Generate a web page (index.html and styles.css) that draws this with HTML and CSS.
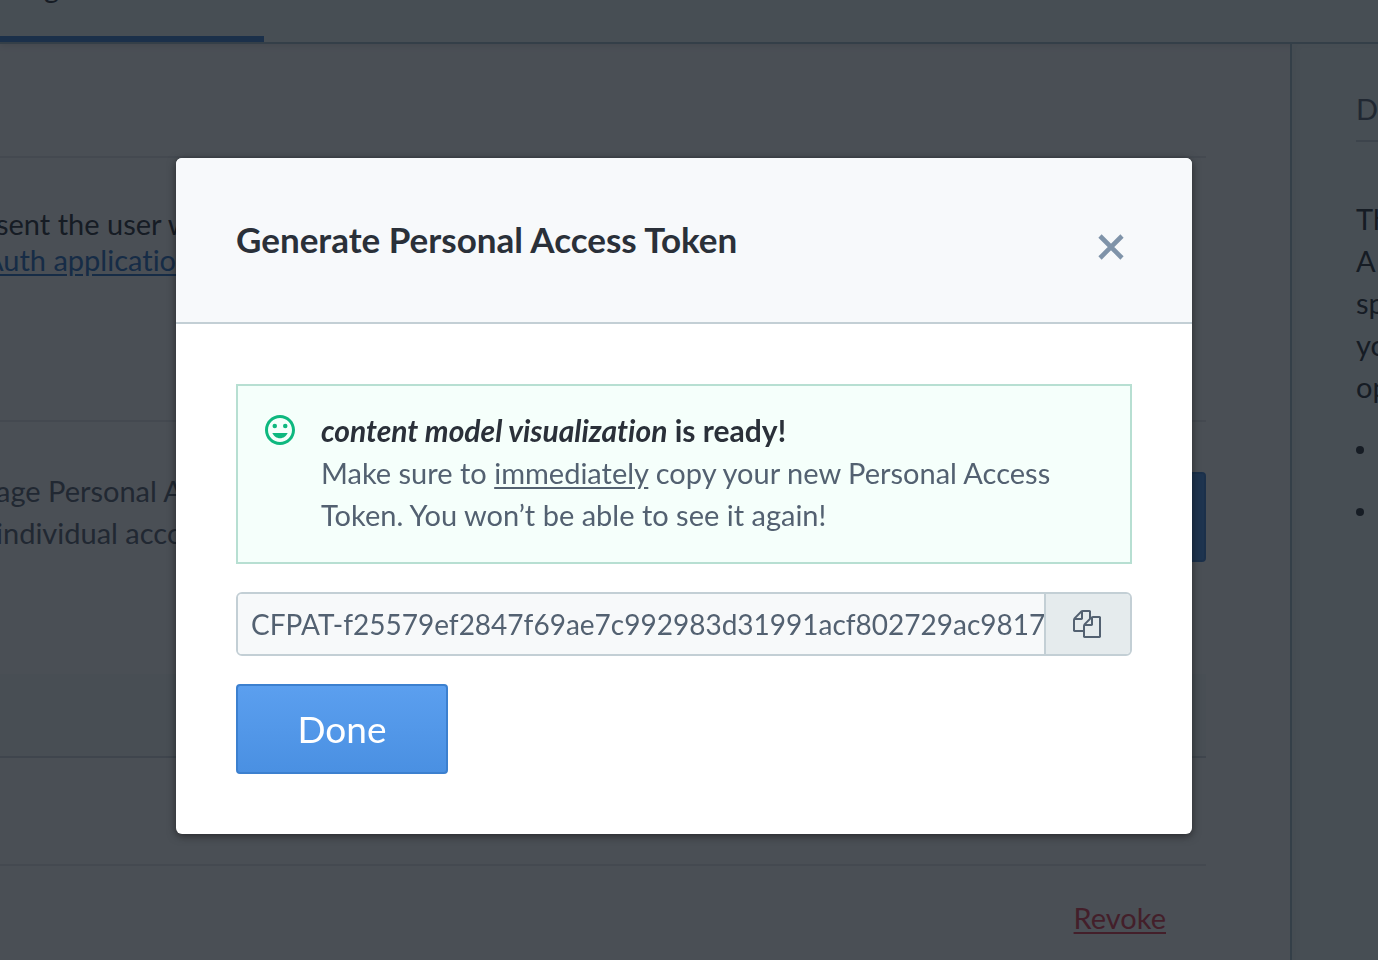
FILE: index.html
```html
<!DOCTYPE html>
<html lang="en">
<head>
    <meta charset="UTF-8">
    <meta name="viewport" content="width=device-width, initial-scale=1.0">
    <title>Personal Access Tokens</title>
    <link rel="stylesheet" href="styles.css">
</head>
<body>
    <div class="page">
        <nav class="tabs">
            <a href="#" class="tab">g</a>
        </nav>
        <div class="layout">
            <main class="content">
                <section class="section heading"></section>
                <section class="section oauth">
                    <p>sent the user w</p>
                    <a href="#">Auth application</a>
                </section>
                <section class="tokens">
                    <p>age Personal A<br>individual acco</p>
                    <button class="btn generate" aria-label="Generate personal token"></button>
                </section>
                <div class="list-head"></div>
                <div class="list-row"></div>
                <div class="list-row">
                    <a href="#" class="revoke">Revoke</a>
                </div>
            </main>
            <aside class="sidebar">
                <h2>D</h2>
                <p>Th<br>A<br>sp<br>yo<br>op</p>
                <ul>
                    <li></li>
                    <li></li>
                </ul>
            </aside>
        </div>
    </div>

    <div class="overlay">
        <div class="modal" role="dialog" aria-modal="true" aria-labelledby="modalTitle">
            <header class="modal-header">
                <h1 id="modalTitle">Generate Personal Access Token</h1>
                <button class="close" aria-label="Close">
                    <svg width="26" height="26" viewBox="0 0 26 26" fill="none" stroke="currentColor" stroke-width="4.6">
                        <path d="M2 2L24 24M24 2L2 24"/>
                    </svg>
                </button>
            </header>
            <div class="modal-body">
                <div class="note">
                    <svg class="note-icon" width="36" height="36" viewBox="0 0 24 24" fill="currentColor">
                        <path d="M11.99 2C6.47 2 2 6.48 2 12s4.47 10 9.99 10C17.52 22 22 17.52 22 12S17.52 2 11.99 2zM12 20c-4.42 0-8-3.58-8-8s3.58-8 8-8 8 3.58 8 8-3.58 8-8 8z"/>
                        <circle cx="8.5" cy="9.4" r="1.5"/>
                        <circle cx="15.5" cy="9.4" r="1.5"/>
                        <path d="M12 17.5c2.33 0 4.31-1.46 5.11-3.5H6.89c.8 2.04 2.78 3.5 5.11 3.5z"/>
                    </svg>
                    <div class="note-text">
                        <strong><em>content model visualization</em> is ready!</strong>
                        <p>Make sure to <u>immediately</u> copy your new Personal Access Token. You won’t be able to see it again!</p>
                    </div>
                </div>
                <div class="token-field">
                    <input type="text" aria-label="Personal access token" value="CFPAT-f25579ef2847f69ae7c992983d31991acf802729ac9817" readonly>
                    <button class="copy" aria-label="Copy token">
                        <svg width="28" height="28" viewBox="0 0 1792 1792" fill="currentColor">
                            <path d="M1696 384q40 0 68 28t28 68v1216q0 40-28 68t-68 28h-960q-40 0-68-28t-28-68v-288h-544q-40 0-68-28t-28-68v-672q0-40 20-88t48-76l408-408q28-28 76-48t88-20h416q40 0 68 28t28 68v328q68-40 128-40h416zm-544 213l-299 299h299v-299zm-640-384l-299 299h299v-299zm196 647l316-316v-416h-384v416q0 40-28 68t-68 28h-416v640h512v-256q0-40 20-88t48-76zm956 804v-1152h-384v416q0 40-28 68t-68 28h-416v640h896z"/>
                        </svg>
                    </button>
                </div>
                <button class="btn done">Done</button>
            </div>
        </div>
    </div>
</body>
</html>
```
FILE: styles.css
```css
* {
    box-sizing: border-box;
}

body {
    margin: 0;
    height: 100vh;
    overflow: hidden;
    font-family: 'Avenir Next', Lato, sans-serif;
    font-size: 29px;
    font-variant-ligatures: none;
    line-height: 42px;
    color: #536171;
    background-color: #f7f9fa;
}

h1, h2, p, ul {
    margin: 0;
    padding: 0;
}

button, input {
    font: inherit;
}

/* page behind the modal */
.page {
    height: 100vh;
    display: flex;
    flex-direction: column;
    overflow: hidden;
}

.tabs {
    display: flex;
    align-items: flex-end;
    height: 44px;
    flex-shrink: 0;
    background-color: #e9f5f5;
    border-bottom: 2px solid #a0bcc6;
    box-shadow: 0 2px 6px rgba(0, 0, 0, 0.1);
    overflow: hidden;
}

.tab {
    width: 264px;
    height: 76px;
    padding-left: 44px;
    border-bottom: 6px solid #3c80cf;
    color: #2a3039;
    text-decoration: none;
}

.layout {
    display: grid;
    grid-template-columns: 1fr 88px;
    flex: 1;
}

.content {
    padding-right: 84px;
}

.content p {
    margin-left: -4px;
    white-space: nowrap;
}

.section {
    border-bottom: 2px solid #dfe4e8;
}

.heading {
    height: 114px;
}

.oauth {
    height: 264px;
    padding-top: 48px;
    line-height: 36px;
    color: #2a3039;
}

.oauth a {
    display: block;
    margin-left: -16px;
    color: #2a6fc0;
    text-underline-offset: 3px;
}

.tokens {
    display: flex;
    justify-content: space-between;
    align-items: flex-start;
    height: 252px;
    padding-top: 50px;
}

.tokens p {
    margin-top: -2px;
}

.btn {
    height: 90px;
    border: 2px solid #3c80cf;
    border-radius: 4px;
    background: linear-gradient(#5b9fef, #4a90e2);
    color: #ffffff;
    cursor: pointer;
}

.generate {
    width: 300px;
    background: #4a90e2;
}

.list-head {
    height: 84px;
    background-color: #edf5f5;
    border-bottom: 2px solid #c9d3da;
}

.list-row {
    height: 108px;
    padding: 31px 40px;
    text-align: right;
    border-bottom: 2px solid #dfe4e8;
}

.revoke {
    color: #dc3c50;
    text-underline-offset: 3px;
}

.sidebar {
    padding: 44px 0 0 64px;
    background-color: #e9f5f5;
    border-left: 2px solid #a0bcc6;
    box-shadow: inset 4px 0 6px rgba(0, 0, 0, 0.04);
    overflow: hidden;
    white-space: nowrap;
    color: #2a3039;
}

.sidebar h2 {
    padding-bottom: 10px;
    border-bottom: 2px solid #c3cfd5;
    font-size: 29px;
    font-weight: 400;
    color: #536171;
}

.sidebar p {
    margin-top: 56px;
}

.sidebar li {
    width: 8px;
    height: 8px;
    margin-top: 54px;
    border-radius: 50%;
    background-color: #2a3039;
    list-style: none;
}

.sidebar li:first-child {
    margin-top: 38px;
}

/* modal */
.overlay {
    position: fixed;
    inset: 0;
    display: flex;
    justify-content: center;
    align-items: flex-start;
    padding: 158px 10px 0 0;
    background-color: rgba(16, 21, 30, 0.75);
}

.modal {
    width: 100%;
    max-width: 1016px;
    border-radius: 6px;
    background-color: #ffffff;
    box-shadow: 0 2px 8px rgba(0, 0, 0, 0.5);
    overflow: hidden;
}

.modal-header {
    display: flex;
    justify-content: space-between;
    align-items: center;
    padding: 60px 60px 62px;
    background-color: #f7f9fb;
    border-bottom: 2px solid #c3cfd5;
}

.modal-header h1 {
    font-size: 35px;
    font-weight: 700;
    line-height: 42px;
    color: #2a3039;
}

.close {
    display: flex;
    padding: 16px 8px 0;
    border: none;
    background: none;
    color: #7f93a9;
    cursor: pointer;
}

.modal-body {
    padding: 60px;
}

.note {
    display: flex;
    gap: 23px;
    padding: 24px 24px 26px;
    border: 2px solid #b7dfd2;
    background-color: #f5fffb;
}

.note-icon {
    flex-shrink: 0;
    margin-top: 2px;
    color: #0eb87f;
}

.note strong {
    display: block;
    margin-bottom: 2px;
    font-size: 30px;
    line-height: 40px;
    color: #2a3039;
}

.note u {
    text-underline-offset: 3px;
}

.token-field {
    display: flex;
    height: 64px;
    margin: 28px 0;
    border: 2px solid #c3cfd5;
    border-radius: 6px;
    overflow: hidden;
}

.token-field input {
    flex: 1;
    min-width: 0;
    padding: 0 0 0 13px;
    border: none;
    background-color: #f7f9fa;
    font-size: 28px;
    color: #536171;
    outline: none;
}

.copy {
    display: flex;
    justify-content: center;
    align-items: center;
    width: 86px;
    padding: 0 2px 0 0;
    border: none;
    border-left: 2px solid #c3cfd5;
    background-color: #e5ebed;
    color: #536171;
    cursor: pointer;
}

.done {
    display: block;
    width: 212px;
    font-size: 37px;
}
```
